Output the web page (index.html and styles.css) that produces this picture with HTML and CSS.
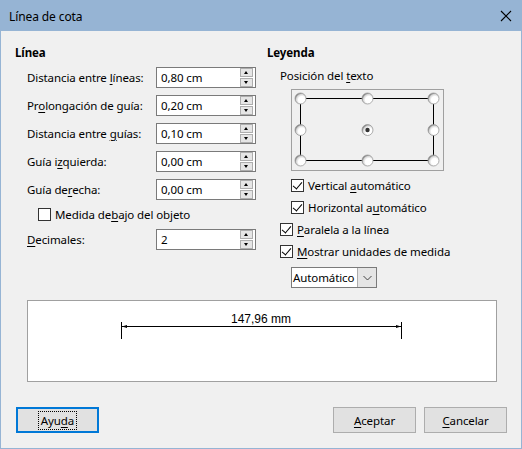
FILE: index.html
```html
<!DOCTYPE html>
<html lang="es">
<head>
  <meta charset="UTF-8">
  <title>Línea de cota</title>
  <link rel="stylesheet" href="styles.css">
</head>
<body>
  <div class="window">
    <div class="titlebar">
      <span class="title">Línea de cota</span>
      <svg class="close" width="12" height="12" viewBox="0 0 12 12">
        <path d="M1 1 L11 11 M11 1 L1 11" stroke="#000" stroke-width="1.1" fill="none"/>
      </svg>
    </div>

    <div class="content">
      <div class="columns">
        <section class="col-left">
          <h2 class="heading">Línea</h2>
          <div class="fields">
            <span class="field-label">Distancia entre <u>l</u>íneas:</span>
            <div class="spin"><span class="spin-value">0,80 cm</span><span class="spin-btns"><i class="up"></i><i class="down"></i></span></div>

            <span class="field-label">Pr<u>o</u>longación de guía:</span>
            <div class="spin"><span class="spin-value">0,20 cm</span><span class="spin-btns"><i class="up"></i><i class="down"></i></span></div>

            <span class="field-label">Distancia entre <u>g</u>uías:</span>
            <div class="spin"><span class="spin-value">0,10 cm</span><span class="spin-btns"><i class="up"></i><i class="down"></i></span></div>

            <span class="field-label">Guía i<u>z</u>quierda:</span>
            <div class="spin"><span class="spin-value">0,00 cm</span><span class="spin-btns"><i class="up"></i><i class="down"></i></span></div>

            <span class="field-label">Guía de<u>r</u>echa:</span>
            <div class="spin"><span class="spin-value">0,00 cm</span><span class="spin-btns"><i class="up"></i><i class="down"></i></span></div>

            <label class="check check-wide">
              <span class="box"></span>
              <span>Medida de<u>b</u>ajo del objeto</span>
            </label>

            <span class="field-label"><u>D</u>ecimales:</span>
            <div class="spin"><span class="spin-value">2</span><span class="spin-btns"><i class="up"></i><i class="down"></i></span></div>
          </div>
        </section>

        <section class="col-right">
          <h2 class="heading">Leyenda</h2>
          <div class="sublabel">Posición del <u>t</u>exto</div>
          <div class="position">
            <svg width="151" height="80" viewBox="0 0 151 80">
              <defs>
                <radialGradient id="ring" cx="0.62" cy="0.62" r="0.62">
                  <stop offset="0.5" stop-color="#ffffff"/>
                  <stop offset="0.8" stop-color="#d6d6d6"/>
                  <stop offset="1" stop-color="#7c7c7c"/>
                </radialGradient>
              </defs>
              <rect x="8.5" y="8.5" width="133" height="62" fill="none" stroke="#000" stroke-width="1"/>
              <g fill="url(#ring)" stroke="#9a9a9a" stroke-width="0.8">
                <circle cx="8.5" cy="8.5" r="5.5"/>
                <circle cx="75.5" cy="8.5" r="5.5"/>
                <circle cx="141.5" cy="8.5" r="5.5"/>
                <circle cx="8.5" cy="40" r="5.5"/>
                <circle cx="75.5" cy="40" r="5.5"/>
                <circle cx="141.5" cy="40" r="5.5"/>
                <circle cx="8.5" cy="70.5" r="5.5"/>
                <circle cx="75.5" cy="70.5" r="5.5"/>
                <circle cx="141.5" cy="70.5" r="5.5"/>
              </g>
              <circle cx="75.5" cy="40" r="2.2" fill="#333"/>
            </svg>
          </div>
          <label class="check check-deep">
            <span class="box checked"></span>
            <span>Vertical <u>a</u>utomático</span>
          </label>
          <label class="check check-deep">
            <span class="box checked"></span>
            <span>Horizontal a<u>u</u>tomático</span>
          </label>
          <label class="check check-sub">
            <span class="box checked"></span>
            <span><u>P</u>aralela a la línea</span>
          </label>
          <label class="check check-sub">
            <span class="box checked"></span>
            <span><u>M</u>ostrar unidades de medida</span>
          </label>
          <div class="select">
            <span class="select-value">Automático</span>
            <span class="select-btn">
              <svg width="9" height="6" viewBox="0 0 9 6"><path d="M0.5 1 L4.5 5 L8.5 1" stroke="#444" fill="none"/></svg>
            </span>
          </div>
        </section>
      </div>

      <div class="preview">
        <svg width="467" height="80" viewBox="0 0 467 80">
          <path d="M93.5 21 V38 M373.5 21 V38 M94 25.5 H373" stroke="#000" stroke-width="1" fill="none"/>
          <path d="M94 25.5 L99 24 L99 27 Z M373 25.5 L368 24 L368 27 Z" fill="#000"/>
          <text x="233" y="22" text-anchor="middle" class="preview-text">147,96 mm</text>
        </svg>
      </div>

      <div class="buttons">
        <button class="btn btn-default"><span class="focus">Ayu<u>d</u>a</span></button>
        <div class="buttons-right">
          <button class="btn"><u>A</u>ceptar</button>
          <button class="btn"><u>C</u>ancelar</button>
        </div>
      </div>
    </div>
  </div>
</body>
</html>
```

FILE: styles.css
```css
body {
  margin: 0;
  font-family: "Noto Sans", "Liberation Sans", sans-serif;
  font-size: 11.5px;
  letter-spacing: -0.1px;
  color: #000;
  background-color: #f0f0f0;
}

u {
  text-decoration-thickness: 1px;
  text-underline-offset: 2px;
}

.window {
  width: 522px;
  height: 449px;
  box-sizing: border-box;
  border: 1px solid #96b4d4;
  border-top: none;
  background-color: #f0f0f0;
  display: flex;
  flex-direction: column;
}

.titlebar {
  height: 31px;
  background-color: #96b4d4;
  display: flex;
  align-items: center;
  padding: 0 9px 0 8px;
  flex-shrink: 0;
}

.title {
  font-size: 12px;
  margin-top: 1px;
}

.close {
  margin-left: auto;
}

.content {
  padding: 14px 14px 0 14px;
  display: flex;
  flex-direction: column;
}

.columns {
  display: flex;
  gap: 12px;
}

.col-left {
  width: 240px;
}

.col-right {
  display: flex;
  flex-direction: column;
  align-items: flex-start;
}

.heading {
  margin: 0;
  font-size: 11.5px;
  font-weight: bold;
  line-height: 16px;
}

.fields {
  margin-top: 6px;
  padding-left: 12px;
  display: grid;
  grid-template-columns: 129px 100px;
  grid-template-rows: repeat(5, 21px) 15px 21px;
  row-gap: 7px;
  align-items: center;
}

.field-label {
  line-height: 16px;
}

.spin {
  height: 21px;
  box-sizing: border-box;
  border: 1px solid #7a7a7a;
  background-color: #fff;
  display: flex;
  align-items: center;
}

.spin-value {
  padding-left: 4px;
}

.spin-btns {
  margin-left: auto;
  margin-right: 2px;
  display: flex;
  flex-direction: column;
  gap: 1px;
}

.spin-btns i {
  width: 11px;
  height: 7px;
  border: 1px solid #adadad;
  background-color: #e5e5e5;
  position: relative;
}

.spin-btns i::after {
  content: "";
  position: absolute;
  left: 3px;
  width: 0;
  height: 0;
  border-left: 2.5px solid transparent;
  border-right: 2.5px solid transparent;
}

.spin-btns .up::after {
  top: 2px;
  border-bottom: 3px solid #000;
}

.spin-btns .down::after {
  top: 2px;
  border-top: 3px solid #000;
}

.check {
  display: flex;
  align-items: center;
  gap: 4px;
  height: 15px;
  line-height: 15px;
}

.check-wide {
  grid-column: 1 / 3;
  padding-left: 11px;
}

.check-deep {
  margin-left: 24px;
  margin-top: 7px;
}

.check-sub {
  margin-left: 13px;
  margin-top: 7px;
}

.box {
  width: 13px;
  height: 13px;
  box-sizing: border-box;
  border: 1px solid #333;
  background-color: #fff;
  flex-shrink: 0;
  position: relative;
}

.box.checked::after {
  content: "";
  position: absolute;
  left: 3px;
  top: 0px;
  width: 4px;
  height: 8px;
  border-right: 1px solid #000;
  border-bottom: 1px solid #000;
  transform: rotate(40deg);
}

.sublabel {
  margin-top: 7px;
  margin-left: 13px;
  line-height: 16px;
}

.position {
  margin-top: 5px;
  margin-left: 24px;
  width: 153px;
  height: 82px;
  box-sizing: border-box;
  border: 1px solid #a0a0a0;
}

.position svg {
  display: block;
}

.select {
  margin-top: 8px;
  margin-left: 24px;
  width: 86px;
  height: 21px;
  box-sizing: border-box;
  border: 1px solid #7a7a7a;
  background-color: #fff;
  display: flex;
  align-items: stretch;
}

.select-value {
  padding-left: 1px;
  line-height: 19px;
}

.select-btn {
  margin-left: auto;
  width: 18px;
  border-left: 1px solid #adadad;
  background-color: #e5e5e5;
  display: flex;
  align-items: center;
  justify-content: center;
}

.preview {
  margin: 12px 10px 0 12px;
  height: 82px;
  box-sizing: border-box;
  border: 1px solid #a0a0a0;
  background-color: #fff;
}

.preview svg {
  display: block;
}

.preview-text {
  font-family: "Liberation Sans", Arial, sans-serif;
  font-size: 12px;
  letter-spacing: 0;
  fill: #000;
}

.buttons {
  margin-top: 25px;
  display: flex;
  align-items: center;
}

.buttons-right {
  margin-left: auto;
  display: flex;
  gap: 8px;
}

.btn {
  width: 83px;
  height: 26px;
  box-sizing: border-box;
  border: 1px solid #adadad;
  background-color: #e1e1e1;
  font-family: inherit;
  font-size: 11.5px;
  letter-spacing: -0.1px;
  color: #000;
  padding: 0;
}

.btn-default {
  margin-left: 1px;
  border: 2px solid #0078d7;
}

.btn-default .focus {
  outline: 1px dotted #000;
  outline-offset: 1px;
  padding: 0 1px;
}
```
